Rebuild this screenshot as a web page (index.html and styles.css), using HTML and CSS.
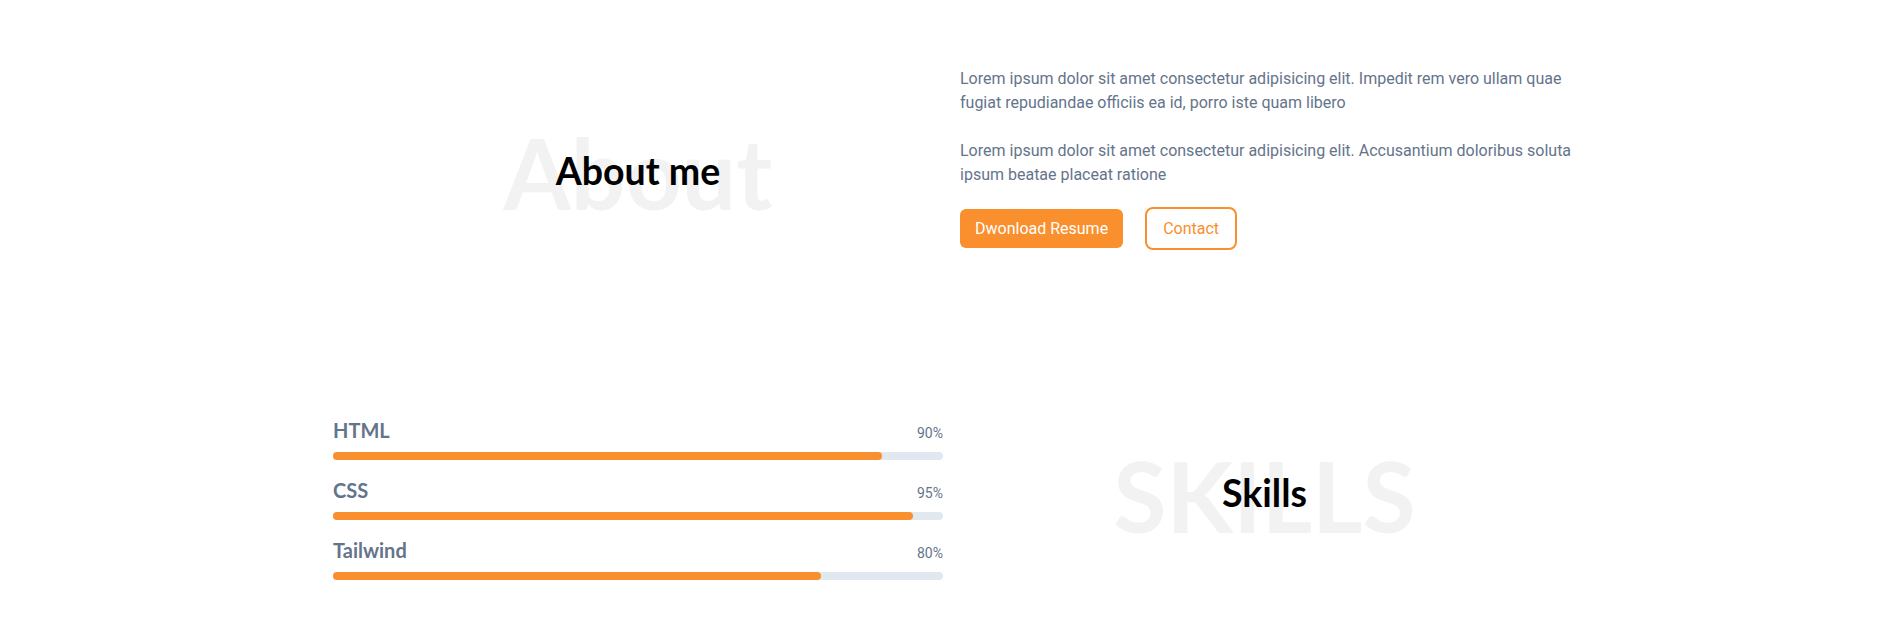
FILE: index.html
```html
<!DOCTYPE html>
<html lang="en">
<head>
<meta charset="utf-8">
<title>About me</title>
<link rel="stylesheet" href="styles.css">
</head>
<body>
<main class="container">
  <section class="about">
    <div class="title-stack about-stack">
      <span class="bg-word">About</span>
      <h2 class="title">About me</h2>
    </div>
    <div class="about-text">
      <p>Lorem ipsum dolor sit amet consectetur adipisicing elit. Impedit rem vero ullam quae fugiat repudiandae officiis ea id, porro iste quam libero</p>
      <p>Lorem ipsum dolor sit amet consectetur adipisicing elit. Accusantium doloribus soluta ipsum beatae placeat ratione</p>
      <div class="actions">
        <a class="btn btn-fill" href="#">Dwonload Resume</a>
        <a class="btn btn-outline" href="#">Contact</a>
      </div>
    </div>
  </section>

  <section class="skills">
    <div class="skill-list">
      <div class="skill">
        <div class="skill-head"><span class="skill-name">HTML</span><span class="skill-pct">90%</span></div>
        <div class="track"><div class="fill" style="width:90%"></div></div>
      </div>
      <div class="skill">
        <div class="skill-head"><span class="skill-name">CSS</span><span class="skill-pct">95%</span></div>
        <div class="track"><div class="fill" style="width:95%"></div></div>
      </div>
      <div class="skill">
        <div class="skill-head"><span class="skill-name">Tailwind</span><span class="skill-pct">80%</span></div>
        <div class="track"><div class="fill" style="width:80%"></div></div>
      </div>
    </div>
    <div class="title-stack skills-stack">
      <span class="bg-word">SKILLS</span>
      <h2 class="title">Skills</h2>
    </div>
  </section>
</main>
</body>
</html>
```
FILE: styles.css
```css
* { box-sizing: border-box; }
html, body { margin: 0; padding: 0; background: #ffffff; }
body {
  font-family: Roboto, "Noto Sans", sans-serif;
  font-size: 16px;
  line-height: 24px;
  color: #64748b;
}
.container {
  max-width: 1280px;
  margin: 0 auto;
  padding: 0 24px;
}
.about, .skills {
  display: grid;
  column-gap: 17px;
}
.about {
  grid-template-columns: 610px 622px;
  padding-top: 67px;
}
.skills {
  grid-template-columns: 610px 609px;
  margin-top: 166px;
}

.title-stack {
  display: grid;
  justify-items: center;
  align-items: start;
}
.title-stack > * { grid-area: 1 / 1; }
.bg-word {
  font-family: Lato, sans-serif;
  font-weight: 700;
  font-size: 97px;
  line-height: 97px;
  color: #f2f2f2;
  white-space: nowrap;
}
.title {
  margin: 0;
  font-family: Lato, sans-serif;
  font-weight: 700;
  font-size: 37.5px;
  line-height: 45px;
  color: #000000;
}
.about-stack .bg-word { margin-top: 57px; }
.about-stack .title { margin-top: 81px; }
.skills-stack .bg-word { margin-top: 31px; }
.skills-stack .title { margin-top: 54px; }

.about-text p { margin: 0 0 24px; }
.about-text p + p { margin-bottom: 20px; }
.actions {
  display: flex;
  align-items: center;
  gap: 22px;
}
.btn {
  display: inline-flex;
  align-items: center;
  justify-content: center;
  text-decoration: none;
  font-size: 16px;
  line-height: 24px;
}
.btn-fill {
  height: 39px;
  padding: 0 15px;
  background: #f98f2d;
  color: #ffffff;
  border-radius: 6px;
}
.btn-outline {
  height: 43px;
  padding: 0 16px;
  border: 2px solid #f98f2d;
  color: #f98f2d;
  border-radius: 8px;
}

.skill-list {
  display: flex;
  flex-direction: column;
  gap: 16px;
}
.skill-head {
  display: flex;
  justify-content: space-between;
  align-items: baseline;
}
.skill-name {
  font-family: Lato, sans-serif;
  font-weight: 700;
  font-size: 20px;
  line-height: 28px;
  color: #64748b;
}
.skill-pct {
  font-size: 14px;
  line-height: 20px;
  color: #64748b;
}
.track {
  margin-top: 8px;
  height: 8px;
  border-radius: 9999px;
  background: #e2e8f0;
}
.fill {
  height: 100%;
  border-radius: 9999px;
  background: #f98f2d;
}
```
